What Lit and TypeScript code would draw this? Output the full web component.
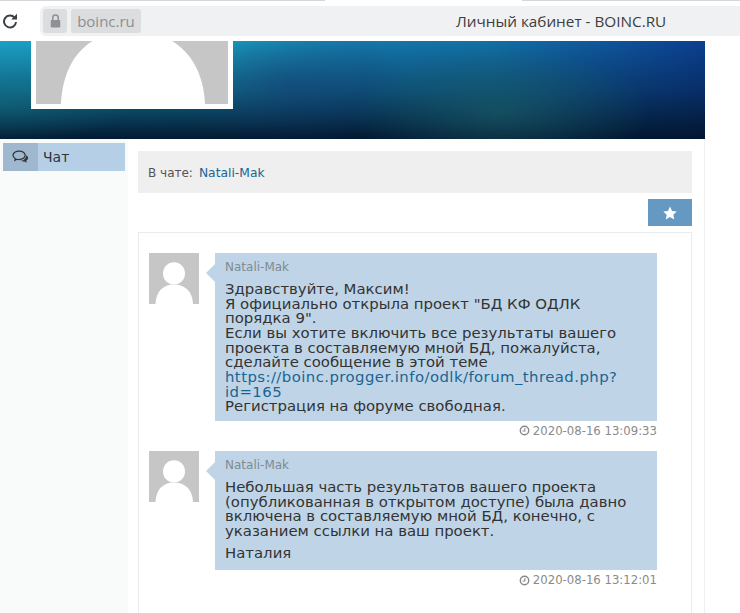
import { LitElement, html, css, svg } from 'lit';
import { customElement } from 'lit/decorators.js';

const person = svg`
  <rect width="50" height="50" fill="#c6c6c6"></rect>
  <circle cx="25" cy="20" r="11" fill="#fff"></circle>
  <path d="M6.500 50C7 38 14 31 25 31S43.500 38 44 50Z" fill="#fff"></path>
`;

const clock = html`<svg class="clock" viewBox="0 0 12 12" width="11" height="11">
  <circle cx="6" cy="6" r="4.6" fill="none" stroke="#888" stroke-width="1.5"></circle>
  <path d="M6.400 3.200V6.500H3.800" fill="none" stroke="#888" stroke-width="1.1"></path>
</svg>`;

@customElement('app-root')
export class AppRoot extends LitElement {
  static styles = css`
    :host {
      display: block;
      height: 613px;
      overflow: hidden;
      background: #fff;
      font-family: 'DejaVu Sans', sans-serif;
      color: #333;
    }
    .tabline {
      display: flex;
      justify-content: space-between;
      height: 1px;
    }
    .tabline i {
      display: block;
      height: 1px;
      background: #d5d7da;
    }
    .tabline i:first-child { width: 325px; }
    .tabline i:last-child { width: 218px; }
    .browser {
      display: flex;
      align-items: flex-start;
      height: 40px;
      padding-top: 5px;
      box-sizing: border-box;
    }
    .reload {
      flex: none;
      width: 40px;
      padding: 7px 0 0 2px;
      box-sizing: border-box;
    }
    .reload svg { display: block; }
    .omnibox {
      flex: 1;
      display: flex;
      align-items: center;
      gap: 4px;
      height: 30px;
      padding-left: 3px;
      background: #f0f1f3;
      border-radius: 6px 0 0 6px;
    }
    .chip {
      display: flex;
      align-items: center;
      justify-content: center;
      height: 24px;
      background: #dcddde;
      border-radius: 3px;
    }
    .chip.lock { width: 24px; }
    .chip.host {
      width: 70px;
      font: 15px 'Open Sans', sans-serif;
      color: #8c8e91;
    }
    .title {
      margin-left: 311px;
      font: 15.300px 'Open Sans', sans-serif;
      color: #3d3d3d;
      white-space: nowrap;
    }
    .banner {
      display: flex;
      align-items: flex-end;
      width: 705px;
      height: 98px;
      overflow: hidden;
      background:
        radial-gradient(ellipse 150px 65px at 71% 72%, rgba(30, 100, 105, 0.55), rgba(30, 100, 105, 0)),
        radial-gradient(ellipse 120px 60px at 41% 45%, rgba(24, 50, 110, 0.4), rgba(24, 50, 110, 0)),
        radial-gradient(ellipse 130px 40px at 0% 65%, rgba(20, 120, 130, 0.35), rgba(20, 120, 130, 0)),
        linear-gradient(to bottom, rgba(2, 20, 44, 0) 0%, rgba(2, 20, 44, 0.4) 50%, rgba(2, 20, 44, 0.96) 100%),
        linear-gradient(to right, #1ba0c5 0%, #199abf 33%, #1477aa 52%, #1270a6 70%, #0e4f98 90%, #0b3f90 100%);
    }
    .bigavatar {
      flex: none;
      display: block;
      width: 192px;
      height: 193px;
      margin: 0 0 30px 31px;
      border: 5px solid #fff;
    }
    .page {
      display: grid;
      grid-template-columns: 128px 577px 1fr;
      height: 474px;
    }
    .side {
      background: #f9fbfb;
      padding: 4px 3px;
    }
    .navitem {
      display: flex;
      align-items: center;
      width: 122px;
      height: 28px;
      background: #b5d0e6;
      font-size: 14px;
      color: #333;
    }
    .navicon {
      display: flex;
      align-items: center;
      justify-content: center;
      width: 35px;
      height: 28px;
      margin-right: 5px;
      background: #a0b8cf;
    }
    .main {
      padding: 12px 12px 0 10px;
      border-right: 1px solid #edf0f2;
    }
    .inchat {
      display: flex;
      align-items: center;
      gap: 6px;
      height: 42px;
      padding: 2px 0 0 10px;
      box-sizing: border-box;
      background: #efefef;
      font-size: 12px;
      color: #555;
    }
    .inchat a { font-size: 12.300px; }
    a {
      color: #1b6492;
      text-decoration: none;
    }
    .actions {
      display: flex;
      justify-content: flex-end;
      padding: 6px 0 6px;
    }
    .star {
      display: flex;
      align-items: center;
      justify-content: center;
      width: 44px;
      height: 27px;
      background: #6699c2;
    }
    .panel {
      border: 1px solid #e8ecee;
      padding: 20px 34px 0 10px;
      height: 500px;
    }
    .msg {
      display: grid;
      grid-template-columns: 50px 1fr;
      column-gap: 16px;
      margin-bottom: 10px;
    }
    .avatar {
      display: block;
      width: 50px;
      height: 51px;
    }
    .bubble {
      position: relative;
      background: #bfd5e7;
      padding: 7px 28px 7px 10px;
      font-size: 14.900px;
      line-height: 14.650px;
      color: #333;
    }
    .bubble a { letter-spacing: 0.430px; }
    .bubble::before {
      content: '';
      position: absolute;
      left: -9px;
      top: 11px;
      border: 9px solid transparent;
      border-left: 0;
      border-right-color: #bfd5e7;
    }
    .name {
      font-size: 12px;
      line-height: 14px;
      color: #808a92;
      margin-bottom: 8px;
    }
    p { margin: 0; }
    p + p { margin: 7.500px 0 2.600px; }
    .time {
      grid-column: 2;
      display: flex;
      align-items: center;
      justify-content: flex-end;
      gap: 3px;
      height: 20px;
      font-size: 11.700px;
      color: #8a8a8a;
    }
    .clock { display: block; }
  `;

  private _message(body: unknown, time: string) {
    return html`
      <div class="msg">
        <svg class="avatar" viewBox="0 0 50 50" preserveAspectRatio="none">${person}</svg>
        <div class="bubble">
          <div class="name">Natali-Mak</div>
          ${body}
        </div>
        <div class="time">${clock}<span>${time}</span></div>
      </div>
    `;
  }

  render() {
    return html`
      <div class="tabline"><i></i><i></i></div>
      <div class="browser">
        <div class="reload">
          <svg viewBox="0 0 16 16" width="16" height="16">
            <path d="M12.600 4.600A6 6 0 1 0 14 9" fill="none" stroke="#3c4043" stroke-width="2"></path>
            <path d="M9.200 6.400L15 6.600V0.800Z" fill="#3c4043"></path>
          </svg>
        </div>
        <div class="omnibox">
          <div class="chip lock">
            <svg viewBox="0 0 12 15" width="11" height="14">
              <path d="M3 7V4a3 3 0 0 1 6 0V7" fill="none" stroke="#8e9093" stroke-width="1.600"></path>
              <rect x="0.800" y="6.500" width="10.400" height="8" rx="1" fill="#8e9093"></rect>
            </svg>
          </div>
          <div class="chip host">boinc.ru</div>
          <div class="title">Личный кабинет - BOINC.RU</div>
        </div>
      </div>
      <div class="banner">
        <svg class="bigavatar" viewBox="0 0 50 50" preserveAspectRatio="none">${person}</svg>
      </div>
      <div class="page">
        <div class="side">
          <div class="navitem">
            <span class="navicon">
              <svg viewBox="0 0 18 15" width="17" height="14">
                <path d="M7.500 1.200C3.900 1.200 1 3.200 1 5.700c0 1.400 1 2.700 2.400 3.500L3 11l2.200-1.100c.7.2 1.500.3 2.300.3 3.600 0 6.500-2 6.500-4.500S11.100 1.200 7.500 1.200Z" fill="none" stroke="#333" stroke-width="1.300"></path>
                <path d="M15.200 5.500c1.200.8 1.900 1.800 1.900 3 0 1.200-.8 2.300-2 3l.6 2.200-2.600-1.400c-1.500.2-3-.1-4.100-.8 2.800 0 5.600-1.500 6.200-6Z" fill="#333"></path>
              </svg>
            </span>
            Чат
          </div>
        </div>
        <div class="main">
          <div class="inchat"><span>В чате:</span><a href="#">Natali-Mak</a></div>
          <div class="actions">
            <div class="star">
              <svg viewBox="0 0 14 14" width="14" height="14">
                <path d="M7 .6l2 4.300 4.700.6-3.400 3.200.9 4.700L7 11.100l-4.200 2.300.9-4.700L.3 5.500 5 4.900Z" fill="#fff"></path>
              </svg>
            </div>
          </div>
          <div class="panel">
            ${this._message(
              html`<p>Здравствуйте, Максим!<br />Я официально открыла проект "БД КФ ОДЛК порядка 9".<br />Если вы хотите включить все результаты вашего проекта в составляемую мной БД, пожалуйста, сделайте сообщение в этой теме<br /><a href="#">https://boinc.progger.info/odlk/forum_thread.php?id=165</a><br />Регистрация на форуме свободная.</p>`,
              '2020-08-16 13:09:33',
            )}
            ${this._message(
              html`<p>Небольшая часть результатов вашего проекта (опубликованная в открытом доступе) была давно включена в составляемую мной БД, конечно, с указанием ссылки на ваш проект.</p><p>Наталия</p>`,
              '2020-08-16 13:12:01',
            )}
          </div>
        </div>
        <div></div>
      </div>
    `;
  }
}
